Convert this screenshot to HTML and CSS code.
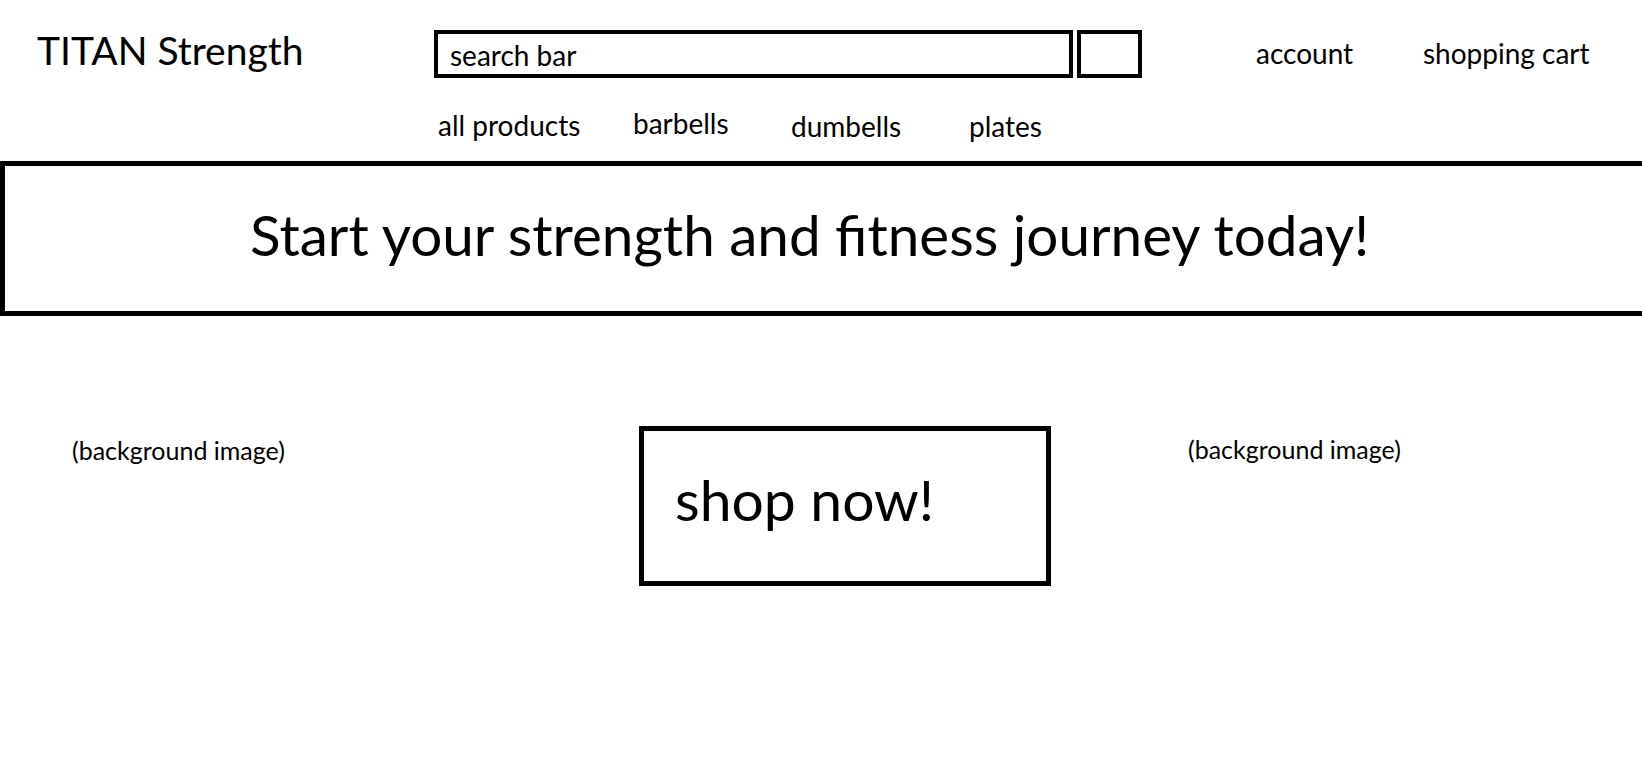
FILE: index.html
```html
<!DOCTYPE html>
<html lang="en">
<head>
<meta charset="utf-8">
<title>TITAN Strength</title>
<link rel="stylesheet" href="styles.css">
</head>
<body>
<div class="page">
  <header class="top">
    <div class="brand">TITAN Strength</div>
    <div class="center">
      <div class="search-row">
        <div class="search">search bar</div>
        <div class="search-btn"></div>
      </div>
      <nav class="cats">
        <a class="cat">all products</a>
        <a class="cat cat-up">barbells</a>
        <a class="cat cat-down">dumbells</a>
        <a class="cat cat-down">plates</a>
      </nav>
    </div>
    <div class="links">
      <a class="link link-account">account</a>
      <a class="link">shopping cart</a>
    </div>
  </header>

  <section class="hero">
    <h1 class="hero-title">Start your strength and fitness journey today!</h1>
  </section>

  <main class="stage">
    <div class="bg bg-left">(background image)</div>
    <div class="shop">shop now!</div>
    <div class="bg bg-right">(background image)</div>
  </main>
</div>
</body>
</html>
```
FILE: styles.css
```css
html, body {
  margin: 0;
  padding: 0;
  background: #ffffff;
}

body {
  font-family: Lato, "Open Sans", "Liberation Sans", sans-serif;
  color: #000000;
}

.page {
  width: 100%;
  height: 774px;
  overflow: hidden;
}

.top {
  display: grid;
  grid-template-columns: 434px 708px 1fr;
  align-items: start;
}

.brand {
  padding: 27px 0 0 37px;
  font-size: 39px;
  line-height: 46px;
  white-space: nowrap;
}

.center {
  padding-top: 30px;
}

.search-row {
  display: flex;
  gap: 4px;
}

.search {
  box-sizing: border-box;
  width: 639px;
  height: 48px;
  border: 4px solid #000;
  padding: 2px 0 0 12px;
  font-size: 28px;
  line-height: 38px;
}

.search-btn {
  box-sizing: border-box;
  width: 65px;
  height: 48px;
  border: 4px solid #000;
}

.cats {
  display: grid;
  grid-template-columns: 195px 158px 178px auto;
  align-items: start;
  margin-top: 27px;
  padding-left: 4px;
}

.cat {
  font-size: 28px;
  line-height: 40px;
  white-space: nowrap;
}

.cat-up {
  margin-top: -2px;
}

.cat-down {
  margin-top: 1px;
}

.links {
  display: flex;
  padding: 33px 0 0 114px;
}

.link {
  font-size: 28px;
  line-height: 40px;
  white-space: nowrap;
}

.link-account {
  width: 167px;
}

.hero {
  box-sizing: border-box;
  width: calc(100% + 20px);
  height: 155px;
  margin-top: 15px;
  border: 5px solid #000;
}

.hero-title {
  margin: 0;
  padding: 33px 0 0 245px;
  font-size: 56.6px;
  font-weight: 400;
  line-height: 70px;
  white-space: nowrap;
}

.stage {
  display: grid;
  grid-template-columns: 639px 412px 1fr;
  align-items: start;
  margin-top: 110px;
}

.bg {
  font-size: 25px;
  line-height: 30px;
  white-space: nowrap;
}

.bg-left {
  padding: 9px 0 0 72px;
}

.bg-right {
  padding: 8px 0 0 137px;
}

.shop {
  box-sizing: border-box;
  height: 160px;
  border: 5px solid #000;
  padding: 33px 0 0 31px;
  font-size: 57px;
  line-height: 70px;
  white-space: nowrap;
}
```
